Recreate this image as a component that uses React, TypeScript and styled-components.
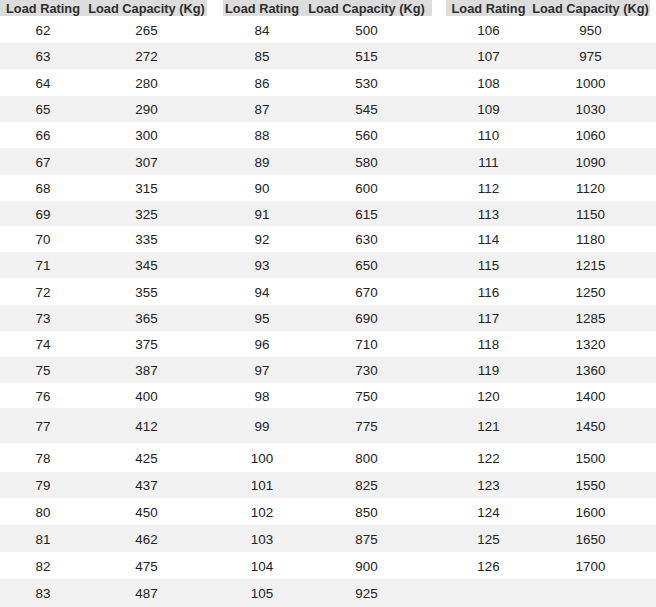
import React from "react";
import styled, { createGlobalStyle } from "styled-components";

const Global = createGlobalStyle`
  html, body { margin: 0; padding: 0; background: #ffffff; }
  body { font-family: "Liberation Sans", Arial, Helvetica, sans-serif; }
`;

const Table = styled.table`
  width: 656px;
  table-layout: fixed;
  border-collapse: collapse;
  border-spacing: 0;
  font-family: "Liberation Sans", Arial, Helvetica, sans-serif;
  color: #222222;
`;

const HeadRow = styled.tr`
  height: 16px;
`;

const HeadCell = styled.th`
  background: #dcdcdc;
  color: #2e2e2e;
  font-size: 12.8px;
  font-weight: bold;
  text-align: center;
  padding: 1px 0 0 0;
  height: 15px;
  line-height: 15px;
  white-space: nowrap;
  overflow: visible;
`;

const GapHead = styled.th`
  background: #ffffff;
  padding: 0;
`;

const Row = styled.tr<{ $striped: boolean; $h: number }>`
  height: ${(p) => p.$h}px;
  background: ${(p) => (p.$striped ? "#f1f1f1" : "#ffffff")};
`;

const Cell = styled.td`
  font-size: 13.4px;
  text-align: center;
  vertical-align: middle;
  padding: 1px 0 0 0;
  line-height: 15px;
`;

const Gap = styled.td`
  padding: 0;
`;

const t1 = [265, 272, 280, 290, 300, 307, 315, 325, 335, 345, 355, 365, 375, 387, 400, 412, 425, 437, 450, 462, 475, 487];
const t2 = [500, 515, 530, 545, 560, 580, 600, 615, 630, 650, 670, 690, 710, 730, 750, 775, 800, 825, 850, 875, 900, 925];
const t3 = [950, 975, 1000, 1030, 1060, 1090, 1120, 1150, 1180, 1215, 1250, 1285, 1320, 1360, 1400, 1450, 1500, 1550, 1600, 1650, 1700];
const heights = [27, 26, 27, 26, 26, 27, 26, 25, 26, 26, 27, 26, 26, 26, 25, 35, 29, 26, 27, 27, 27, 28];

export default function App() {
  return (
    <>
      <Global />
      <Table>
        <colgroup>
          <col style={{ width: 86 }} />
          <col style={{ width: 121 }} />
          <col style={{ width: 16 }} />
          <col style={{ width: 78 }} />
          <col style={{ width: 131 }} />
          <col style={{ width: 14 }} />
          <col style={{ width: 85 }} />
          <col style={{ width: 119 }} />
          <col style={{ width: 6 }} />
        </colgroup>
        <thead>
          <HeadRow>
            <HeadCell>Load Rating</HeadCell>
            <HeadCell>Load Capacity (Kg)</HeadCell>
            <GapHead />
            <HeadCell>Load Rating</HeadCell>
            <HeadCell>Load Capacity (Kg)</HeadCell>
            <GapHead />
            <HeadCell>Load Rating</HeadCell>
            <HeadCell>Load Capacity (Kg)</HeadCell>
            <GapHead />
          </HeadRow>
        </thead>
        <tbody>
          {heights.map((h, i) => (
            <Row key={i} $h={h} $striped={i % 2 === 1}>
              <Cell>{62 + i}</Cell>
              <Cell>{t1[i]}</Cell>
              <Gap />
              <Cell>{84 + i}</Cell>
              <Cell>{t2[i]}</Cell>
              <Gap />
              <Cell>{t3[i] !== undefined ? 106 + i : ""}</Cell>
              <Cell>{t3[i] !== undefined ? t3[i] : ""}</Cell>
              <Gap />
            </Row>
          ))}
        </tbody>
      </Table>
    </>
  );
}
